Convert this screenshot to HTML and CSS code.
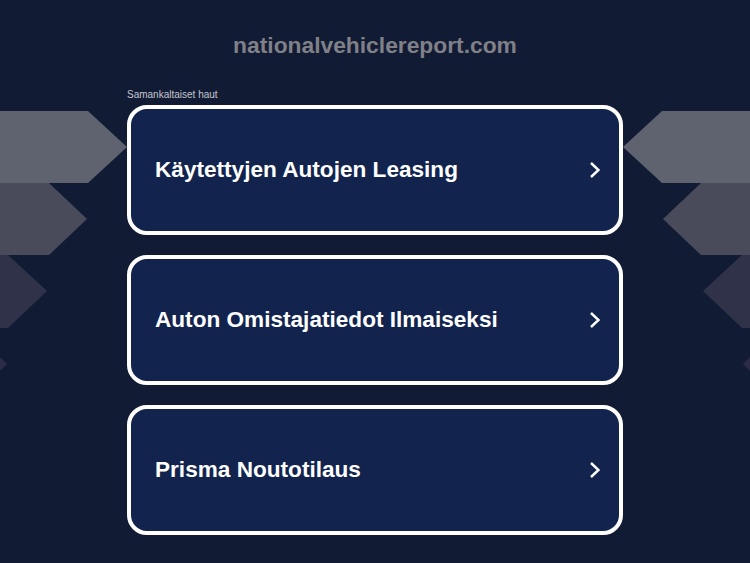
FILE: index.html
```html
<!DOCTYPE html>
<html>
<head>
    <meta charset="utf-8">
    <title>nationalvehiclereport.com</title>
    <link rel="stylesheet" href="styles.css">
</head>
<body>
    <!-- decorative arrows behind the content -->
    <svg class="deco" width="750" height="563" viewBox="0 0 750 563">
        <polygon fill="#5f626f" points="0,111 88,111 127,147 88,183 0,183" />
        <polygon fill="#494b5b" points="0,183 49,183 87,219 49,255 0,255" />
        <polygon fill="#30324a" points="0,255 8,255 47,291 8,328 0,328" />
        <polygon fill="#2c2b47" points="0,357 7,364 0,371" />
        <polygon fill="#5f626f" points="750,111 662,111 623,147 662,183 750,183" />
        <polygon fill="#494b5b" points="750,183 701,183 663,219 701,255 750,255" />
        <polygon fill="#30324a" points="750,255 742,255 703,291 742,328 750,328" />
        <polygon fill="#2c2b47" points="750,357 743,364 750,371" />
    </svg>
    <div class="page">
        <div class="domain">nationalvehiclereport.com</div>
        <div class="list">
            <div class="list_hd">Samankaltaiset haut</div>
            <a class="item" href="#">
                <span class="text">Käytettyjen Autojen Leasing</span>
                <svg class="arr" width="12" height="18" viewBox="0 0 12 18"><path d="M2 2 L9.5 9 L2 16" /></svg>
            </a>
            <a class="item" href="#">
                <span class="text">Auton Omistajatiedot Ilmaiseksi</span>
                <svg class="arr" width="12" height="18" viewBox="0 0 12 18"><path d="M2 2 L9.5 9 L2 16" /></svg>
            </a>
            <a class="item" href="#">
                <span class="text">Prisma Noutotilaus</span>
                <svg class="arr" width="12" height="18" viewBox="0 0 12 18"><path d="M2 2 L9.5 9 L2 16" /></svg>
            </a>
        </div>
    </div>
</body>
</html>
```

FILE: styles.css
```css
html, body { margin: 0; padding: 0; }
body { background: #121b34; font-family: "Liberation Sans", Arial, sans-serif; width: 750px; height: 563px; overflow: hidden; position: relative; }
.deco { position: absolute; left: 0; top: 0; z-index: 0; }
.page { position: relative; z-index: 1; display: flex; flex-direction: column; align-items: center; }
.domain { margin-top: 31px; height: 28px; line-height: 28px; font-size: 22.8px; font-weight: bold; color: #808088; }
.list { width: 496px; margin-top: 30px; display: flex; flex-direction: column; gap: 20px; }
.list_hd { font-size: 10px; line-height: 12px; color: #c4c6d0; margin-bottom: -16px; height: 12px; }
.item { box-sizing: border-box; height: 130px; border: 4px solid #fff; border-radius: 20px; background: #12244e; display: flex; align-items: center; justify-content: space-between; padding: 0 18px 0 24px; text-decoration: none; }
.item .text { color: #fff; font-size: 22.6px; font-weight: bold; }
.item .arr { fill: none; stroke: #fff; stroke-width: 2.4; }
```
